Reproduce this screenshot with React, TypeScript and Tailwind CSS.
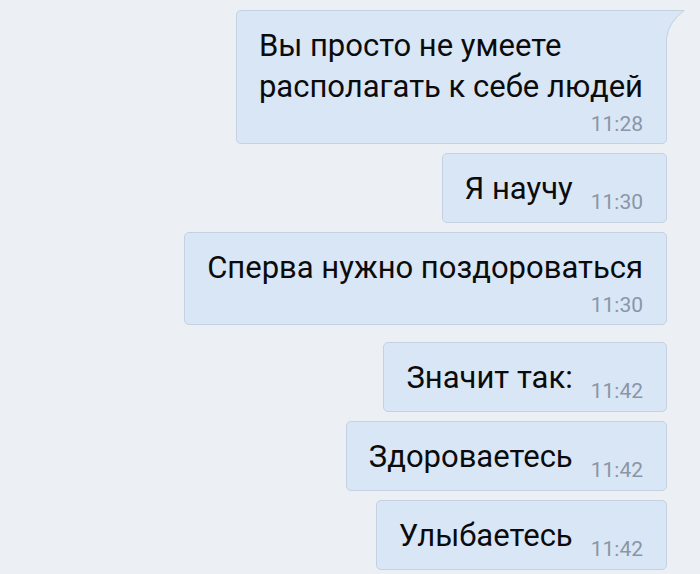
const font = { fontFamily: 'Roboto, "Noto Sans", sans-serif' };

type Msg = { text: string[]; time: string; below?: boolean; tail?: boolean; gapTop?: boolean };

const messages: Msg[] = [
  { text: ["Вы просто не умеете", "располагать к себе людей"], time: "11:28", below: true, tail: true },
  { text: ["Я научу"], time: "11:30" },
  { text: ["Сперва нужно поздороваться"], time: "11:30", below: true },
  { text: ["Значит так:"], time: "11:42", gapTop: true },
  { text: ["Здороваетесь"], time: "11:42" },
  { text: ["Улыбаетесь"], time: "11:42" },
];

function Tail() {
  return (
    <svg
      className="absolute left-full top-[-1px]"
      width="20"
      height="31"
      viewBox="0 0 20 31"
    >
      <path d="M-1 0 H18.5 Q 3 12 1 28 V31 H-1 Z" fill="#d9e6f6" />
      <path d="M0 0.5 H18.2 Q 2.6 12 0.5 28 V31" fill="none" stroke="#c4d1e1" strokeWidth="1" />
    </svg>
  );
}

function Bubble({ m }: { m: Msg }) {
  const radius = m.tail ? "rounded-[5px] rounded-tr-none" : "rounded-[5px]";
  const space = m.gapTop ? "mt-[8px]" : "";
  if (m.below) {
    return (
      <div className={`relative border border-[#c4d1e1] bg-[#d9e6f6] pl-[22px] pr-[23px] pt-[14px] pb-[7px] ${radius} ${space}`}>
        <div className="text-[31px] leading-[41px] text-[#0b0b0b]">
          {m.text.map((t, i) => (
            <div key={i}>{t}</div>
          ))}
        </div>
        <div className="mt-[5px] text-right text-[21px] leading-[24px] text-[#8996a6]">{m.time}</div>
        {m.tail && <Tail />}
      </div>
    );
  }
  return (
    <div className={`relative flex items-start gap-[18px] border border-[#c4d1e1] bg-[#d9e6f6] pl-[22px] pr-[23px] pt-[14px] pb-[13px] ${radius} ${space}`}>
      <div className="text-[31px] leading-[41px] text-[#0b0b0b]">{m.text[0]}</div>
      <div className="mt-[22px] -mb-[5px] text-[21px] leading-[24px] text-[#8996a6]">{m.time}</div>
    </div>
  );
}

export default function App() {
  return (
    <div
      className="flex h-[574px] w-[700px] flex-col items-end gap-[9px] overflow-hidden bg-[#ecf0f4] pr-[33px] pt-[10px]"
      style={font}
    >
      {messages.map((m, i) => (
        <Bubble key={i} m={m} />
      ))}
    </div>
  );
}
